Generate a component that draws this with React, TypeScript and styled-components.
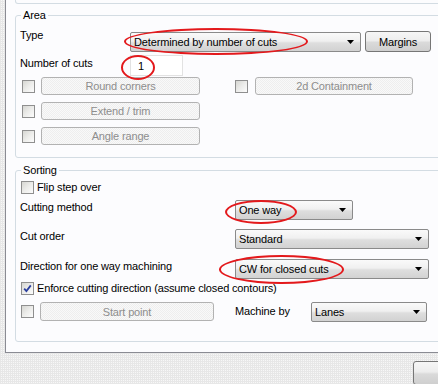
import React from "react";
import styled, { createGlobalStyle } from "styled-components";

const GlobalStyle = createGlobalStyle`
  html, body {
    margin: 0;
    padding: 0;
    overflow: hidden;
  }
  body {
    width: 438px;
    height: 384px;
    background: repeating-conic-gradient(#f7f7f7 0 25%, #e7e7e7 0 100%) 0 0 / 2px 2px;
    font-family: "Liberation Sans", Arial, sans-serif;
    font-size: 11px;
    letter-spacing: -0.15px;
    color: #000;
  }
`;

// the dialog is wider than the frame: the groups run on past its right edge
const Dialog = styled.div`
  position: relative;
  width: 438px;
  height: 384px;
  overflow: hidden;
`;

const Panel = styled.div`
  width: 470px;
  margin-left: 5px;
  height: 352px;
  padding: 0 10px 0 9px;
  border-left: 1px solid #8a8b93;
  border-bottom: 1px solid #8a8b93;
  background: #fcfcfe;
  display: flex;
  flex-direction: column;
`;

const PrevGroup = styled.div`
  height: 3px;
  border: 1px solid #d3dce3;
  border-top: none;
  border-radius: 0 0 3px 3px;
`;

const Group = styled.div<{ $top: number; $height: number }>`
  position: relative;
  box-sizing: border-box;
  margin-top: ${(p) => p.$top}px;
  height: ${(p) => p.$height}px;
  border: 1px solid #d3dce3;
  border-radius: 3px;
  display: flex;
  flex-direction: column;
`;

const Legend = styled.span`
  position: absolute;
  top: -7px;
  left: 5px;
  padding: 0 2px;
  line-height: 13px;
  background: #fcfcfe;
`;

const Row = styled.div<{ $mt: number; $pl?: number }>`
  display: flex;
  align-items: flex-start;
  margin-top: ${(p) => p.$mt}px;
  padding-left: ${(p) => p.$pl ?? 4}px;
`;

const Label = styled.span<{ $w: number; $pt?: number }>`
  width: ${(p) => p.$w}px;
  flex: none;
  line-height: 13px;
  padding-top: ${(p) => p.$pt ?? 1}px;
  white-space: nowrap;
`;

const Combo = styled.div<{ $w: number; $mt?: number }>`
  box-sizing: border-box;
  width: ${(p) => p.$w}px;
  height: 20px;
  margin-top: ${(p) => p.$mt ?? 0}px;
  padding: 0 6px 0 3px;
  border: 1px solid #8a8a8a;
  border-radius: 2px;
  background: linear-gradient(#fafafa 0%, #f0f0f0 45%, #dedede 55%, #d2d2d2 100%);
  line-height: 18px;
  white-space: nowrap;
  display: flex;
  align-items: center;
  justify-content: space-between;
`;

const Arrow = styled.svg`
  width: 7px;
  height: 4px;
  flex: none;
`;

const PushButton = styled.div<{ $w: number; $h: number; $mt?: number; $ml?: number }>`
  box-sizing: border-box;
  width: ${(p) => p.$w}px;
  height: ${(p) => p.$h}px;
  margin-top: ${(p) => p.$mt ?? 0}px;
  margin-left: ${(p) => p.$ml ?? 0}px;
  flex: none;
  border: 1px solid #767676;
  border-radius: 3px;
  background: linear-gradient(#f6f6f6 0%, #ededed 45%, #dadada 55%, #cfcfcf 100%);
  display: flex;
  align-items: center;
  justify-content: center;
`;

const DisabledButton = styled.div<{ $w: number; $h: number }>`
  box-sizing: border-box;
  width: ${(p) => p.$w}px;
  height: ${(p) => p.$h}px;
  flex: none;
  border: 1px solid #b2b2b2;
  border-radius: 3px;
  background: repeating-conic-gradient(#f9f9f9 0 25%, #eeeeee 0 50%) 0 0 / 2px 2px;
  color: #8d8d8d;
  display: flex;
  align-items: center;
  justify-content: center;
`;

const Edit = styled.div`
  box-sizing: border-box;
  width: 53px;
  height: 21px;
  padding-left: 7px;
  border: 1px solid #e2e2e2;
  background: #fff;
  display: flex;
  align-items: center;
`;

const CheckGrid = styled.div`
  display: grid;
  grid-template-columns: 213px auto;
  grid-auto-rows: 18px;
  row-gap: 7px;
  margin-top: 1px;
  padding-left: 6px;
`;

const CheckCell = styled.div<{ $gap: number; $w?: number }>`
  display: flex;
  align-items: center;
  gap: ${(p) => p.$gap}px;
  width: ${(p) => (p.$w ? `${p.$w}px` : "auto")};
  flex: none;
`;

const Box = styled.span`
  box-sizing: border-box;
  width: 13px;
  height: 13px;
  flex: none;
  border: 1px solid #8f8f8f;
  background: linear-gradient(135deg, #d6d6d2 0%, #ececea 50%, #fcfcfc 100%);
  display: flex;
  align-items: center;
  justify-content: center;
`;

const CheckRow = styled.div<{ $mt: number }>`
  display: flex;
  align-items: center;
  gap: 3px;
  margin-top: ${(p) => p.$mt}px;
  padding-left: 5px;
  line-height: 13px;
  white-space: nowrap;
`;

const Footer = styled.div`
  display: flex;
  margin-top: 8px;
  padding-left: 413px;
`;

const Mark = styled.span<{ $x: number; $y: number; $w: number; $h: number }>`
  position: absolute;
  left: ${(p) => p.$x}px;
  top: ${(p) => p.$y}px;
  width: ${(p) => p.$w}px;
  height: ${(p) => p.$h}px;
  box-sizing: border-box;
  border: 2px solid #e3191c;
  border-radius: 50%;
  pointer-events: none;
`;

const DropArrow = () => (
  <Arrow viewBox="0 0 7 4">
    <path d="M0 0h7L3.5 4z" fill="#000" />
  </Arrow>
);

const Check = ({ checked }: { checked?: boolean }) => (
  <Box>
    {checked && (
      <svg width="9" height="9" viewBox="0 0 9 9">
        <path d="M1.2 4.6 L3.4 7 L7.8 1.4" fill="none" stroke="#2b3f9e" strokeWidth="1.8" />
      </svg>
    )}
  </Box>
);

export default function App() {
  return (
    <Dialog>
      <GlobalStyle />
      <Panel>
        <PrevGroup />
        <Group $top={11} $height={143}>
          <Legend>Area</Legend>
          <Row $mt={13}>
            <Label $w={110} $pt={0}>Type</Label>
            <Combo $w={231} $mt={3}>
              <span>Determined by number of cuts</span>
              <DropArrow />
            </Combo>
            <PushButton $w={66} $h={21} $mt={2} $ml={4}>Margins</PushButton>
          </Row>
          <Row $mt={3}>
            <Label $w={110} $pt={2}>Number of cuts</Label>
            <Edit>1</Edit>
          </Row>
          <CheckGrid>
            <CheckCell $gap={6}>
              <Check />
              <DisabledButton $w={159} $h={18}>Round corners</DisabledButton>
            </CheckCell>
            <CheckCell $gap={7}>
              <Check />
              <DisabledButton $w={158} $h={18}>2d Containment</DisabledButton>
            </CheckCell>
            <CheckCell $gap={6}>
              <Check />
              <DisabledButton $w={159} $h={18}>Extend / trim</DisabledButton>
            </CheckCell>
            <div />
            <CheckCell $gap={6}>
              <Check />
              <DisabledButton $w={159} $h={18}>Angle range</DisabledButton>
            </CheckCell>
          </CheckGrid>
        </Group>
        <Group $top={12} $height={172}>
          <Legend>Sorting</Legend>
          <CheckRow $mt={10}>
            <Check />
            Flip step over
          </CheckRow>
          <Row $mt={6}>
            <Label $w={215}>Cutting method</Label>
            <Combo $w={118}>
              <span>One way</span>
              <DropArrow />
            </Combo>
          </Row>
          <Row $mt={9}>
            <Label $w={215}>Cut order</Label>
            <Combo $w={194}>
              <span>Standard</span>
              <DropArrow />
            </Combo>
          </Row>
          <Row $mt={10}>
            <Label $w={215}>Direction for one way machining</Label>
            <Combo $w={194}>
              <span>CW for closed cuts</span>
              <DropArrow />
            </Combo>
          </Row>
          <CheckRow $mt={3}>
            <Check checked />
            Enforce cutting direction (assume closed contours)
          </CheckRow>
          <Row $mt={7} $pl={5}>
            <CheckCell $gap={6} $w={214}>
              <Check />
              <DisabledButton $w={174} $h={19}>Start point</DisabledButton>
            </CheckCell>
            <Label $w={76} $pt={3}>Machine by</Label>
            <Combo $w={116}>
              <span>Lanes</span>
              <DropArrow />
            </Combo>
          </Row>
        </Group>
      </Panel>
      <Footer>
        <PushButton $w={75} $h={24} />
      </Footer>
      <Mark $x={124} $y={28} $w={184} $h={27} />
      <Mark $x={121} $y={55} $w={34} $h={25} />
      <Mark $x={225} $y={200} $w={72} $h={24} />
      <Mark $x={219} $y={255} $w={125} $h={29} />
    </Dialog>
  );
}
